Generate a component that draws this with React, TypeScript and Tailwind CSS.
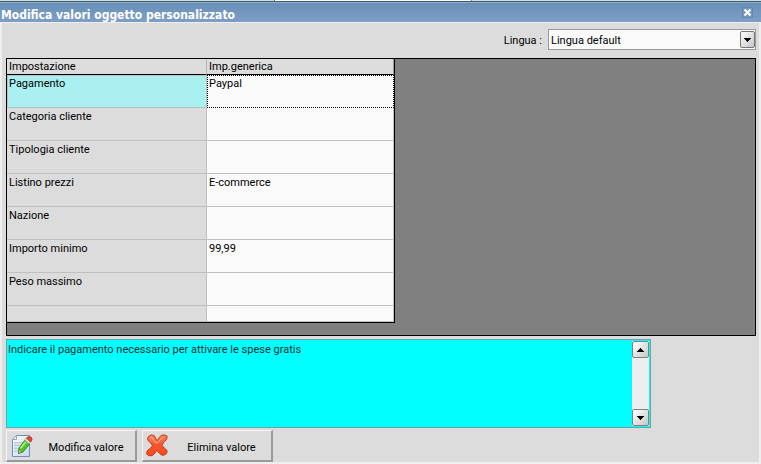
import { useState } from "react"

const initialRows = [
  { label: "Pagamento", value: "Paypal" },
  { label: "Categoria cliente", value: "" },
  { label: "Tipologia cliente", value: "" },
  { label: "Listino prezzi", value: "E-commerce" },
  { label: "Nazione", value: "" },
  { label: "Importo minimo", value: "99,99" },
  { label: "Peso massimo", value: "" },
]

const EditIcon = () => (
  <svg width="22" height="24" viewBox="0 0 22 24" aria-hidden="true">
    <defs>
      <linearGradient id="sheet" x1="0" y1="0" x2="1" y2="1">
        <stop offset="0" stopColor="#ffffff" />
        <stop offset="1" stopColor="#c3d5ea" />
      </linearGradient>
    </defs>
    <path d="M1.5 5.5 L5.5 1.5 H18.5 V22.5 H1.5 Z" fill="url(#sheet)" stroke="#6f8fba" />
    <path d="M1.5 5.5 H5.5 V1.5 Z" fill="#e9f0f8" stroke="#8ba5c8" />
    <path d="M3 8 H12 V18 H3 Z" fill="#d3dfee" />
    <path d="M3 8.5 H12 M3 11.5 H11 M3 14.5 H8 M3 17.5 H8" stroke="#bccce0" />
    <path d="M14 6 L18.5 10 L12 18 L7.5 19.5 L8 14 Z" fill="#4fc526" stroke="#34911e" />
    <path d="M14.5 8 L9.5 14.5" stroke="#a4ec7c" strokeWidth="2" />
    <path d="M8 15.5 L11 18 L7.5 19.5 Z" fill="#eac994" stroke="#526046" strokeWidth="0.5" />
    <path d="M13.5 6 L18 10 L19.5 8 L15.5 4 Z" fill="#d9dde0" stroke="#8b8f91" strokeWidth="0.5" />
    <path d="M15.5 4 Q18 1.5 20.5 3.5 Q22 6 19.5 8 Z" fill="#e3492d" stroke="#c8381f" />
  </svg>
)

const DeleteIcon = () => (
  <svg width="22" height="23" viewBox="0 0 22 23" aria-hidden="true">
    <defs>
      <linearGradient id="cross" x1="0" y1="0" x2="0" y2="1">
        <stop offset="0" stopColor="#ff8a62" />
        <stop offset="0.5" stopColor="#f4542f" />
        <stop offset="1" stopColor="#ff4a16" />
      </linearGradient>
    </defs>
    <path
      d="M2.5 2.5 Q5.5 -0.5 8.5 2 Q9.5 5.5 11.5 6.5 Q13 3.5 15 1.5 Q18 0 21 2 Q21.5 4 20 6 Q17 8.5 16 11.5 Q18 14 21 16.5 Q21.5 19 19.5 20.5 Q17 22 14.5 20.5 Q12.5 17.5 10.5 16.5 Q9.5 19 6.5 21.5 Q3.5 22.5 1 20.5 Q0 18.5 1.5 16.5 Q5 14.5 6.5 11.5 Q5 9 2 6.5 Q1 4 2.5 2.5 Z"
      fill="url(#cross)"
      stroke="#c4351b"
    />
    <path d="M4 3.5 Q6 3 7 5.5 Q9 9 11.5 9 Q13.5 6 17.5 3" fill="none" stroke="#ffab88" strokeWidth="1" />
  </svg>
)

const Arrow = ({ up = false }: { up?: boolean }) => (
  <svg width="7" height="4" viewBox="0 0 7 4" shapeRendering="crispEdges" aria-hidden="true">
    <path d={up ? "M3 0h1v1h1v1h1v1h1v1H0V3h1V2h1V1h1z" : "M0 0h7v1H6v1H5v1H4v1H3V3H2V2H1V1H0z"} fill="#000" />
  </svg>
)

const App = () => {
  const [lang, setLang] = useState("default")
  const [selected, setSelected] = useState(0)

  return (
    <div className="w-full bg-[#dcdcdc] font-[Roboto,'DejaVu_Sans_Condensed',sans-serif] text-[11px] leading-[14px] text-black">
      {/* Title bar */}
      <div className="flex h-px bg-[#d0e0e4]">
        <div className="w-[36%]"></div>
        <div className="w-[26%] border-x border-[#808080] bg-white"></div>
      </div>
      <div className="h-[2px] border-b border-[#8fb0c8] bg-[#405c6c]"></div>
      <header className="flex h-[19px] items-center justify-between bg-linear-to-b from-[#6990b8] to-[#7e9ec6] pr-2 pl-px">
        <h1 className="pt-1 font-['DejaVu_Sans_Condensed','DejaVu_Sans',sans-serif] text-[12px] leading-[14px] font-bold text-white">
          Modifica valori oggetto personalizzato
        </h1>
        <button aria-label="Chiudi" className="flex h-[11px] w-[11px] items-center justify-center border border-[#6087b0] bg-[#7898bf]">
          <svg width="7" height="7" viewBox="0 0 7 7" className="shrink-0" aria-hidden="true">
            <path d="M0.5 0.5 L6.5 6.5 M6.5 0.5 L0.5 6.5" stroke="#fff" strokeWidth="2" />
          </svg>
        </button>
      </header>

      <main className="border-x-2 border-t border-b-2 border-[#eeeeee] pt-[6px] pr-[3px] pl-1">
        {/* Language */}
        <div className="flex items-center justify-end gap-[6px]">
          <label htmlFor="lingua" className="pt-[2px]">Lingua :</label>
          <div className="relative w-[208px]">
            <select
              id="lingua"
              value={lang}
              onChange={(e) => setLang(e.target.value)}
              className="block h-[21px] w-full appearance-none border border-[#999999] bg-[#fafafa] pt-[2px] pr-5 pl-[2px]"
            >
              <option value="default">Lingua default</option>
            </select>
            <span className="pointer-events-none absolute top-[2px] right-px flex h-[17px] w-[15px] items-center justify-center rounded-xs border border-[#777777] bg-linear-to-br from-white to-[#c4c4cc]">
              <Arrow />
            </span>
          </div>
        </div>

        {/* Values grid */}
        <div className="mt-2 border border-black bg-[#808080] pb-3">
          <table className="w-[388px] table-fixed border-separate border-spacing-0 border-r border-b border-black">
            <thead>
              <tr className="h-4 text-left">
                <th className="w-[200px] border-r border-b border-r-[#b4b4b4] border-b-black bg-[#dcdcdc] p-0 pt-px pl-[2px] font-normal">
                  Impostazione
                </th>
                <th className="border-r border-b border-r-[#999999] border-b-black bg-[#dcdcdc] p-0 pt-px pl-[2px] font-normal">
                  Imp.generica
                </th>
              </tr>
            </thead>
            <tbody>
              {initialRows.map((row, i) => (
                <tr key={row.label} className="h-[33px] text-left align-top" onClick={() => setSelected(i)}>
                  <th
                    className={
                      i === selected
                        ? "border border-[#b4c4c4] bg-[#aaf0f0] p-0 pt-px pl-px font-normal"
                        : "border-r border-b border-[#c0c0c0] bg-[#dcdcdc] p-0 pt-[2px] pl-[2px] font-normal"
                    }
                  >
                    {row.label}
                  </th>
                  <td
                    className={
                      i === selected
                        ? "border border-dotted border-black bg-[#fafafa] p-0 pt-px pl-px"
                        : "border-r border-b border-[#c0c0c0] bg-[#fafafa] p-0 pt-[2px] pl-[2px]"
                    }
                  >
                    {row.value}
                  </td>
                </tr>
              ))}
              <tr className="h-4">
                <th className="border-r border-b border-[#c0c0c0] bg-[#dcdcdc] p-0"></th>
                <td className="border-r border-b border-[#c0c0c0] bg-[#fafafa] p-0"></td>
              </tr>
            </tbody>
          </table>
        </div>

        {/* Help text */}
        <div className="mt-[3px] flex h-[89px] w-[86%] border border-[#66a8a8] bg-[#00ffff] pr-px">
          <textarea
            readOnly
            aria-label="Descrizione"
            className="min-w-0 flex-1 resize-none overflow-hidden bg-transparent px-px pt-[3px] text-[#103030] outline-none"
            value="Indicare il pagamento necessario per attivare le spese gratis"
          />
          <div className="my-px flex w-[17px] flex-col justify-between bg-[#eeeeee]">
            <button aria-label="Su" className="flex h-[17px] items-center justify-center rounded-xs border border-[#808080] bg-linear-to-br from-white to-[#c8c8c8]">
              <Arrow up />
            </button>
            <button aria-label="Giù" className="flex h-[17px] items-center justify-center rounded-xs border border-[#808080] bg-linear-to-br from-white to-[#c8c8c8]">
              <Arrow />
            </button>
          </div>
        </div>

        {/* Actions */}
        <div className="mt-[2px] flex gap-[5px]">
          <button className="flex h-8 w-[131px] items-center border-t border-r-2 border-b-2 border-l border-t-[#f5f5f5] border-r-[#999999] border-b-[#999999] border-l-[#f5f5f5] pl-1">
            <EditIcon />
            <span className="flex-1 pt-1 pl-1 text-center">Modifica valore</span>
          </button>
          <button className="flex h-8 w-[131px] items-center border-t border-r-2 border-b-2 border-l border-t-[#f5f5f5] border-r-[#999999] border-b-[#999999] border-l-[#f5f5f5] pl-[3px]">
            <DeleteIcon />
            <span className="flex-1 pt-1 pl-1 text-center">Elimina valore</span>
          </button>
        </div>
      </main>
    </div>
  )
}

export default App
